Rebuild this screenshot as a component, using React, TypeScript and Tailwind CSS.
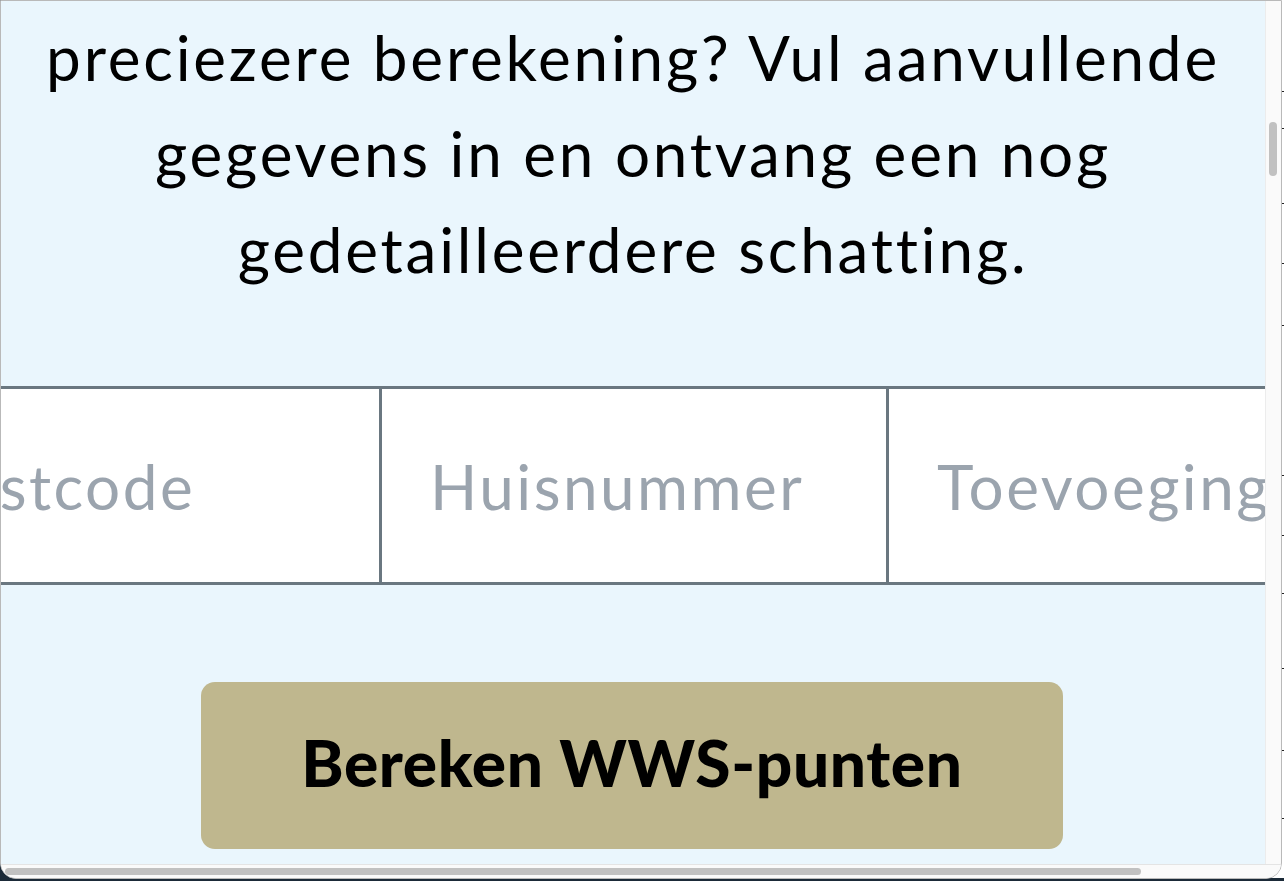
import React from "react";

export default function App() {
  const lines = [91, 128, 203, 263, 325, 475, 535, 593, 668, 750, 818];
  return (
    <div className="relative w-[1284px] h-[881px] overflow-hidden bg-[#1b2a38]" style={{ fontFamily: "Lato, 'Noto Sans', sans-serif" }}>
      {/* background page sliver on the right */}
      <div className="absolute left-[1270px] top-0 w-[14px] h-[878px] bg-white">
        {lines.map((y) => (
          <div key={y} className="absolute left-0 w-full h-px bg-[#222]" style={{ top: y }} />
        ))}
      </div>
      {/* window */}
      <div className="absolute left-0 top-0 w-[1282px] h-[879px] rounded-b-[16px] border border-[#b9b9b9] bg-[#f9f9f9] overflow-hidden flex flex-col">
        <div className="flex flex-1 min-h-0">
          <div className="w-[1265px] h-[863px] bg-[#eaf6fd] overflow-hidden flex flex-col border-r border-[#ececec]">
            <p className="mt-[8px] text-center text-black text-[62px] leading-[96px] tracking-[0.045em] whitespace-nowrap">
              preciezere berekening? Vul aanvullende<br />gegevens in en ontvang een nog<br />gedetailleerdere schatting.
            </p>
            <div className="mt-[89px] ml-[-125px] flex w-max border-y-[3px] border-[#6a7780]">
              <input readOnly placeholder="Postcode" className="w-[506px] h-[193px] shrink-0 bg-white border-r-[3px] border-[#6a7780] pl-[48px] text-[62px] tracking-[0.04em] outline-none placeholder:text-[#9ba4ae]" />
              <input readOnly placeholder="Huisnummer" className="w-[507px] h-[193px] shrink-0 bg-white border-r-[3px] border-[#6a7780] pl-[48px] text-[62px] tracking-[0.04em] outline-none placeholder:text-[#9ba4ae]" />
              <input readOnly placeholder="Toevoeging" className="w-[507px] h-[193px] shrink-0 bg-white pl-[48px] text-[62px] tracking-[0.04em] outline-none placeholder:text-[#9ba4ae]" />
            </div>
            <button className="mt-[97px] ml-[200px] w-[862px] h-[167px] shrink-0 rounded-[14px] bg-[#bfb78e] pb-[5px] text-black font-black text-[64px] tracking-[0.01em]">
              Bereken WWS-punten
            </button>
          </div>
          <div className="w-[14px] bg-[#fafafa] pt-[121px] flex justify-center">
            <div className="w-[8px] h-[54px] rounded-full bg-[#c1c1c1]" />
          </div>
        </div>
        <div className="h-[14px] bg-[#fafafa] border-t border-[#e4e4e4] pt-[3px] pl-[4px]">
          <div className="w-[1136px] h-[7px] rounded-full bg-[#c1c1c1]" />
        </div>
      </div>
    </div>
  );
}
